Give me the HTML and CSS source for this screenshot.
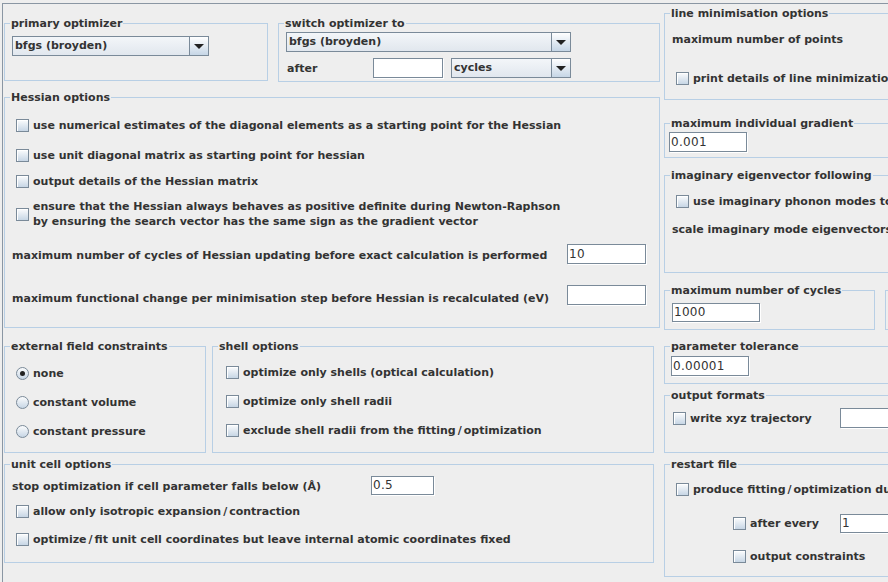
FILE: index.html
```html
<!DOCTYPE html>
<html>
<head>
<meta charset="utf-8">
<title>Optimisation</title>
<link rel="stylesheet" href="styles.css">
</head>
<body>
<div class="frame">
  <div class="left">
    <div class="row r1">
      <div class="box b-primary">
        <div class="title">primary optimizer</div>
        <div class="combo c-primary"><span class="ctext">bfgs (broyden)</span><span class="cbtn"><i class="arrow"></i></span></div>
      </div>
      <div class="box b-switch">
        <div class="title">switch optimizer to</div>
        <div class="combo c-switch"><span class="ctext">bfgs (broyden)</span><span class="cbtn"><i class="arrow"></i></span></div>
        <div class="after-row">
          <span class="after-label">after</span>
          <span class="field f-after"></span>
          <div class="combo c-cycles"><span class="ctext">cycles</span><span class="cbtn"><i class="arrow"></i></span></div>
        </div>
      </div>
    </div>

    <div class="box b-hessian">
      <div class="title">Hessian options</div>
      <div class="chk h1"><span class="cb"></span><span class="lbl">use numerical estimates of the diagonal elements as a starting point for the Hessian</span></div>
      <div class="chk h2"><span class="cb"></span><span class="lbl">use unit diagonal matrix as starting point for hessian</span></div>
      <div class="chk h3"><span class="cb"></span><span class="lbl">output details of the Hessian matrix</span></div>
      <div class="chk h4"><span class="cb"></span><span class="lbl two">ensure that the Hessian always behaves as positive definite during Newton-Raphson<br>by ensuring the search vector has the same sign as the gradient vector</span></div>
      <div class="num-row n1"><span class="num-label">maximum number of cycles of Hessian updating before exact calculation is performed</span><span class="field f-num">10</span></div>
      <div class="num-row n2"><span class="num-label">maximum functional change per minimisation step before Hessian is recalculated (eV)</span><span class="field f-num"></span></div>
    </div>

    <div class="row r3">
      <div class="box b-ext">
        <div class="title">external field constraints</div>
        <div class="chk e1"><span class="rb on"></span><span class="lbl">none</span></div>
        <div class="chk e2"><span class="rb"></span><span class="lbl">constant volume</span></div>
        <div class="chk e3"><span class="rb"></span><span class="lbl">constant pressure</span></div>
      </div>
      <div class="box b-shell">
        <div class="title">shell options</div>
        <div class="chk s1"><span class="cb"></span><span class="lbl">optimize only shells (optical calculation)</span></div>
        <div class="chk s2"><span class="cb"></span><span class="lbl">optimize only shell radii</span></div>
        <div class="chk s3"><span class="cb"></span><span class="lbl">exclude shell radii from the fitting<span class="sl">/</span>optimization</span></div>
      </div>
    </div>

    <div class="box b-cell">
      <div class="title">unit cell options</div>
      <div class="stop-row"><span class="stop-label">stop optimization if cell parameter falls below (Å)</span><span class="field f-stop">0.5</span></div>
      <div class="chk u1"><span class="cb"></span><span class="lbl">allow only isotropic expansion<span class="sl">/</span>contraction</span></div>
      <div class="chk u2"><span class="cb"></span><span class="lbl">optimize<span class="sl">/</span>fit unit cell coordinates but leave internal atomic coordinates fixed</span></div>
    </div>
  </div>

  <div class="right">
    <div class="box b-linemin">
      <div class="title">line minimisation options</div>
      <div class="plain pl1">maximum number of points</div>
      <div class="chk lm1"><span class="cb"></span><span class="lbl">print details of line minimization</span></div>
    </div>
    <div class="box b-maxgrad">
      <div class="title">maximum individual gradient</div>
      <span class="field f-grad">0.001</span>
    </div>
    <div class="box b-imag">
      <div class="title">imaginary eigenvector following</div>
      <div class="chk im1"><span class="cb"></span><span class="lbl">use imaginary phonon modes to direct the search</span></div>
      <div class="plain pl2">scale imaginary mode eigenvectors by</div>
    </div>
    <div class="row r-cycles">
      <div class="box b-maxcyc">
        <div class="title">maximum number of cycles</div>
        <span class="field f-cyc">1000</span>
      </div>
      <div class="box b-maxcyc2">
        <div class="title">update</div>
      </div>
    </div>
    <div class="box b-partol">
      <div class="title">parameter tolerance</div>
      <span class="field f-tol">0.00001</span>
    </div>
    <div class="box b-outfmt">
      <div class="title">output formats</div>
      <div class="chk of1"><span class="cb"></span><span class="lbl w-xyz">write xyz trajectory</span><span class="field f-xyz"></span></div>
    </div>
    <div class="box b-restart">
      <div class="title">restart file</div>
      <div class="chk rs1"><span class="cb"></span><span class="lbl">produce fitting<span class="sl">/</span>optimization dump file</span></div>
      <div class="chk rs2"><span class="cb"></span><span class="lbl w-every">after every</span><span class="field f-every">1</span></div>
      <div class="chk rs3"><span class="cb"></span><span class="lbl">output constraints</span></div>
    </div>
  </div>
</div>
</body>
</html>
```

FILE: styles.css
```css
* { box-sizing: border-box; }
html, body { margin: 0; }
body {
  background: #eeeeee;
  font: bold 11px "DejaVu Sans", sans-serif;
  color: #333333;
  overflow: hidden;
  padding: 3px 0 0 2px;
  width: 888px;
  height: 582px;
}
.frame {
  border-top: 1px solid #8a96a3;
  border-left: 1px solid #8a96a3;
  display: flex;
  width: 886px;
  height: 579px;
  overflow: hidden;
}
.left { width: 657px; flex: none; padding-left: 1px; }
.right { width: 240px; flex: none; margin-left: 4px; }

.row { display: flex; align-items: flex-start; }

.box { border: 1px solid #b8cfe5; flex: none; }
.title {
  display: table;
  margin: -8px 0 -1px 5px;
  padding: 1px 1px 0;
  line-height: 14px;
  background: #eeeeee;
  white-space: nowrap;
}

/* combo boxes */
.combo {
  display: flex;
  height: 20px;
  border: 1px solid #7a8a99;
  background: linear-gradient(#f3f6f9, #e1e7ee);
}
.ctext {
  flex: 1;
  padding-left: 2px;
  line-height: 18px;
  white-space: nowrap;
  overflow: hidden;
}
.cbtn {
  width: 19px;
  flex: none;
  border-left: 1px solid #7a8a99;
  background: linear-gradient(#ffffff, #c6d6e6);
  display: flex;
  align-items: center;
  justify-content: center;
}
.arrow {
  display: block;
  width: 0;
  height: 0;
  border-left: 5px solid transparent;
  border-right: 5px solid transparent;
  border-top: 5px solid #222;
  margin-top: 1px;
}

/* text fields */
.field {
  display: block;
  flex: none;
  height: 20px;
  background: #ffffff;
  border: 1px solid #7a8a99;
  box-shadow: 1px 1px 0 #ffffff;
  font: 12px "DejaVu Sans", sans-serif;
  letter-spacing: 0.3px;
  line-height: 18px;
  padding-left: 1px;
  color: #333333;
  white-space: nowrap;
  overflow: hidden;
}

/* checkbox / radio rows */
.chk { display: flex; align-items: center; }
.cb, .rb {
  width: 13px;
  height: 13px;
  flex: none;
  border: 1px solid #7a8a99;
  background: linear-gradient(#fbfcfd, #c7d6e5);
  box-shadow: inset 1px 1px 0 #ffffff;
}
.rb { border-radius: 50%; box-shadow: none; position: relative; }
.rb.on::after {
  content: "";
  position: absolute;
  left: 3px;
  top: 3px;
  width: 5px;
  height: 5px;
  border-radius: 50%;
  background: #222;
}
.lbl {
  margin-left: 4px;
  line-height: 13px;
  white-space: nowrap;
}
.lbl.two { line-height: 15px; }
.sl { margin: 0 2px; }
.plain { line-height: 13px; padding-top: 1px; margin-bottom: -1px; white-space: nowrap; }

/* row 1 */
.r1 { margin-top: 19px; gap: 10px; }
.b-primary { width: 264px; height: 58px; }
.c-primary { width: 197px; margin: 6px 0 0 7px; }
.b-switch { width: 382px; height: 59px; }
.c-switch { width: 285px; margin: 2px 0 0 7px; }
.after-row { display: flex; align-items: center; margin: 6px 0 0 8px; height: 20px; }
.after-label { width: 86px; padding-top: 1px; }
.f-after { width: 70px; }
.c-cycles { width: 120px; margin-left: 8px; }

/* hessian */
.b-hessian { margin-top: 15px; height: 231px; }
.b-hessian .chk { margin-left: 11px; }
.h1 { margin-top: 15px; }
.h2 { margin-top: 17px; }
.h3 { margin-top: 13px; }
.h4 { margin-top: 11px; }
.num-row { display: flex; align-items: center; margin: 0 13px 0 7px; height: 20px; }
.num-label { flex: 1; white-space: nowrap; padding-top: 2px; }
.n1 { margin-top: 15px; }
.n2 { margin-top: 21px; }
.n2 .num-label { padding-top: 6px; }
.f-num { width: 79px; }

/* row 3 */
.r3 { margin-top: 18px; gap: 6px; }
.b-ext { width: 202px; height: 107px; }
.b-ext .chk { margin-left: 11px; }
.e1 { margin-top: 14px; }
.e2 { margin-top: 16px; }
.e3 { margin-top: 16px; }
.b-shell { width: 442px; height: 107px; }
.b-shell .chk { margin-left: 13px; }
.s1 { margin-top: 13px; }
.s2 { margin-top: 16px; }
.s3 { margin-top: 16px; }

/* unit cell */
.b-cell { margin-top: 11px; width: 650px; height: 99px; }
.stop-row { display: flex; align-items: center; height: 19px; margin: 5px 0 0 7px; }
.stop-label { width: 359px; white-space: nowrap; padding-top: 2px; }
.f-stop { width: 63px; height: 19px; line-height: 17px; }
.b-cell .chk { margin-left: 11px; }
.u1 { margin-top: 10px; }
.u2 { margin-top: 15px; }

/* right column */
.right .box { width: 240px; }
.b-linemin { margin-top: 9px; height: 87px; }
.pl1 { margin: 12px 0 -1px 7px; }
.lm1 { margin: 27px 0 0 11px; }
.b-maxgrad { margin-top: 23px; height: 35px; }
.f-grad { width: 78px; margin: 2px 0 0 4px; }
.b-imag { margin-top: 17px; height: 98px; }
.im1 { margin: 13px 0 0 11px; }
.pl2 { margin: 14px 0 -1px 7px; }
.r-cycles { margin-top: 17px; gap: 10px; }
.right .b-maxcyc { width: 211px; height: 40px; }
.right .b-maxcyc2 { width: 60px; height: 40px; }
.f-cyc { width: 88px; height: 19px; line-height: 17px; margin: 6px 0 0 7px; }
.b-partol { margin-top: 16px; height: 38px; }
.f-tol { width: 78px; margin: 3px 0 0 6px; }
.b-outfmt { margin-top: 11px; height: 58px; }
.of1 { margin: 6px 0 0 8px; height: 20px; }
.w-xyz { width: 150px; }
.f-xyz { width: 60px; }
.b-restart { margin-top: 11px; height: 113px; }
.rs1 { margin: 12px 0 0 11px; }
.rs2 { margin: 17px 0 0 68px; height: 20px; }
.w-every { width: 90px; }
.f-every { width: 60px; height: 19px; line-height: 17px; }
.rs3 { margin: 17px 0 0 68px; }
```
